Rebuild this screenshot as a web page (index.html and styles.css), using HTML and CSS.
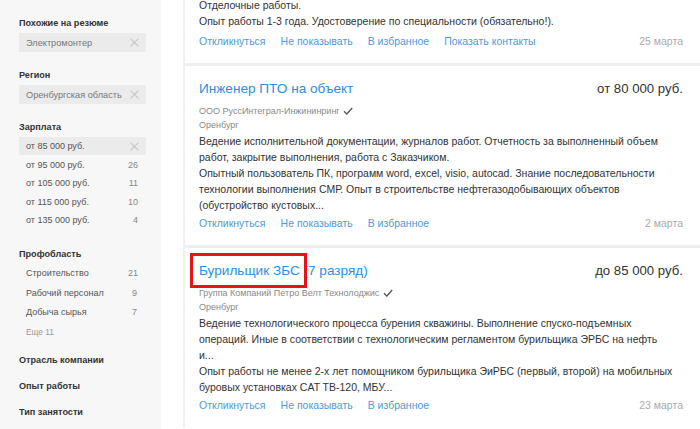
FILE: index.html
```html
<!DOCTYPE html>
<html lang="ru">
<head>
<meta charset="utf-8">
<title>Вакансии</title>
<link rel="stylesheet" href="styles.css">
</head>
<body>
<div class="page">
  <aside class="sidebar">
    <section class="group">
      <h3 class="group-title">Похожие на резюме</h3>
      <div class="tag"><span>Электромонтер</span><span class="x"></span></div>
    </section>
    <section class="group">
      <h3 class="group-title">Регион</h3>
      <div class="tag"><span>Оренбургская область</span><span class="x"></span></div>
    </section>
    <section class="group g-salary">
      <h3 class="group-title">Зарплата</h3>
      <ul class="opts salary">
        <li class="opt selected"><span>от 85 000 руб.</span><span class="x"></span></li>
        <li class="opt"><span>от 95 000 руб.</span><span class="cnt">26</span></li>
        <li class="opt"><span>от 105 000 руб.</span><span class="cnt">11</span></li>
        <li class="opt"><span>от 115 000 руб.</span><span class="cnt">10</span></li>
        <li class="opt"><span>от 135 000 руб.</span><span class="cnt">4</span></li>
      </ul>
    </section>
    <section class="group">
      <h3 class="group-title">Профобласть</h3>
      <ul class="opts prof">
        <li class="opt"><span>Строительство</span><span class="cnt">21</span></li>
        <li class="opt"><span>Рабочий персонал</span><span class="cnt c2">9</span></li>
        <li class="opt"><span>Добыча сырья</span><span class="cnt c2">7</span></li>
        <li class="opt more">Еще 11</li>
      </ul>
    </section>
    <h3 class="group-title collapsed first">Отрасль компании</h3>
    <h3 class="group-title collapsed">Опыт работы</h3>
    <h3 class="group-title collapsed">Тип занятости</h3>
  </aside>

  <main class="main">
    <div class="list">
      <article class="card partial">
        <p class="desc">Отделочные работы.<br>Опыт работы 1-3 года. Удостоверение по специальности (обязательно!).</p>
        <div class="actions">
          <a href="#">Откликнуться</a><a href="#">Не показывать</a><a href="#">В избранное</a><a href="#">Показать контакты</a>
          <span class="date">25 марта</span>
        </div>
      </article>

      <article class="card">
        <div class="head">
          <a class="title" href="#">Инженер ПТО на объект</a>
          <span class="salary">от 80 000 руб.</span>
        </div>
        <div class="company">ООО РуссИнтеграл-Инжининринг <svg class="check" width="10" height="8" viewBox="0 0 10 8"><path d="M1 4.2 L3.8 7 L9.2 1" fill="none" stroke="#555" stroke-width="1.3"/></svg></div>
        <div class="city">Оренбург</div>
        <p class="desc">Ведение исполнительной документации, журналов работ. Отчетность за выполненный объем работ, закрытие выполнения, работа с Заказчиком.<br>Опытный пользователь ПК, программ word, excel, visio, autocad. Знание последовательности технологии выполнения СМР. Опыт в строительстве нефтегазодобывающих объектов (обустройство кустовых...</p>
        <div class="actions">
          <a href="#">Откликнуться</a><a href="#">Не показывать</a><a href="#">В избранное</a>
          <span class="date">2 марта</span>
        </div>
      </article>

      <article class="card">
        <div class="head">
          <a class="title" href="#">Бурильщик ЗБС (7 разряд)</a>
          <span class="salary">до 85 000 руб.</span>
        </div>
        <div class="company">Группа Компаний Петро Велт Технолоджис <svg class="check" width="10" height="8" viewBox="0 0 10 8"><path d="M1 4.2 L3.8 7 L9.2 1" fill="none" stroke="#555" stroke-width="1.3"/></svg></div>
        <div class="city">Оренбург</div>
        <p class="desc">Ведение технологического процесса бурения скважины. Выполнение спуско-подъемных операций. Иные в соответствии с технологическим регламентом бурильщика ЭРБС на нефть<br>и...<br>Опыт работы не менее 2-х лет помощником бурильщика ЭиРБС (первый, второй) на мобильных буровых установках CAT TB-120, МБУ...</p>
        <div class="actions">
          <a href="#">Откликнуться</a><a href="#">Не показывать</a><a href="#">В избранное</a>
          <span class="date">23 марта</span>
        </div>
        <div class="highlight"></div>
      </article>
    </div>
  </main>
</div>
</body>
</html>
```

FILE: styles.css
```css
* { box-sizing: border-box; }
html, body { margin: 0; padding: 0; }
body {
  font-family: "Liberation Sans", Arial, sans-serif;
  color: #333;
  background: #fff;
  width: 700px;
  height: 429px;
  overflow: hidden;
}
.page {
  display: flex;
  align-items: flex-start;
  height: 429px;
}

/* Sidebar */
.sidebar {
  width: 161px;
  flex: none;
  height: 429px;
  background: #f7f7f7;
  padding: 16px 15px 0 19px;
}
.group { margin-bottom: 16px; }
.group.g-salary { margin-bottom: 17px; }
.group-title {
  margin: 0 0 3px;
  font-size: 9.1px;
  line-height: 14px;
  font-weight: bold;
  color: #333;
}
.tag, .opt {
  display: flex;
  justify-content: space-between;
  align-items: center;
  padding: 0 8px 0 7px;
  font-size: 9px;
  color: #555;
}
.tag {
  height: 19px;
  background: #ebebeb;
  color: #777;
  font-size: 9.2px;
}
.x {
  position: relative;
  width: 9px;
  height: 9px;
  margin-right: -1px;
}
.x::before, .x::after {
  content: "";
  position: absolute;
  left: -1px;
  top: 4px;
  width: 11px;
  height: 1px;
  background: #c4c4c4;
  transform: rotate(45deg);
}
.x::after { transform: rotate(-45deg); }
.opts { list-style: none; margin: 0; padding: 0; }
.salary .opt { height: 18.5px; }
.salary .opt.selected { background: #ebebeb; height: 18px; margin-bottom: 0.5px; }
.cnt { color: #888; }
.prof .opt { height: 19.5px; }
.c2 { margin-right: 1px; }
.opt.more { font-size: 8.3px; color: #999; }
.group-title.collapsed { margin: 0 0 12px; }
.group-title.collapsed.first { margin-top: -5px; }

/* Main */
.main {
  flex: 1;
  padding-left: 22px;
}
.list {
  background: #efefef;
  padding-left: 2px;
  display: flex;
  flex-direction: column;
  gap: 3px;
}
.card {
  position: relative;
  background: #fff;
  padding: 11px 17px 14px 14px;
}
.card.partial {
  margin-top: -4px;
  padding-top: 0;
}
.head {
  display: flex;
  justify-content: space-between;
  align-items: center;
  height: 24px;
  margin-bottom: 3px;
}
.title {
  font-size: 13.6px;
  line-height: 24px;
  color: #2b8fe3;
  text-decoration: none;
}
.salary {
  font-size: 13.2px;
  line-height: 24px;
  color: #333;
}
.company, .city {
  font-size: 9px;
  line-height: 14px;
  color: #8a8a8a;
}
.check { margin-left: 1px; vertical-align: -1px; }
.desc {
  margin: 1px 0 0;
  padding-right: 7px;
  font-size: 10.5px;
  line-height: 16px;
  color: #333;
}
.actions {
  display: flex;
  align-items: center;
  gap: 15px;
  margin-top: 2px;
  font-size: 10.5px;
  line-height: 16px;
}
.actions a {
  color: #4f9ad8;
  text-decoration: none;
}
.date {
  margin-left: auto;
  color: #aaa;
}
.partial .actions { margin-top: 4px; }

.highlight {
  position: absolute;
  left: 5px;
  top: 5px;
  width: 117px;
  height: 35px;
  border: 3px solid #e5141b;
  pointer-events: none;
}
```
